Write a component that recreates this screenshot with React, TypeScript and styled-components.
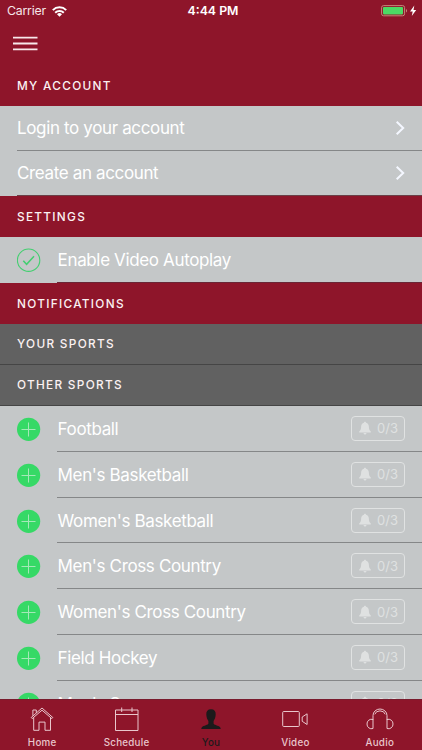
import React from "react";
import styled, { createGlobalStyle } from "styled-components";

const GlobalStyle = createGlobalStyle`
  * { box-sizing: border-box; }
  body { margin: 0; overflow: hidden; }
`;

const crimson = "#8e152a";
const silver = "#c4c7c8";

const Screen = styled.div`
  width: 422px;
  height: 750px;
  display: flex;
  flex-direction: column;
  overflow: hidden;
  background: ${silver};
  color: #fff;
  font-family: Inter, "Liberation Sans", sans-serif;
`;

const StatusBar = styled.header`
  flex: none;
  display: grid;
  grid-template-columns: 1fr auto 1fr;
  align-items: center;
  height: 22px;
  padding: 0 5px 0 7px;
  background: ${crimson};
  line-height: 22px;
`;

const Carrier = styled.div`
  display: flex;
  align-items: center;
  gap: 6px;
  color: #f6e6e9;
  font-size: 12.3px;
  letter-spacing: -0.2px;
`;

const Clock = styled.div`
  padding-left: 2px;
  font-size: 12.3px;
  font-weight: 600;
`;

const Power = styled.div`
  display: flex;
  justify-content: flex-end;
  align-items: center;
`;

const NavBar = styled.nav`
  flex: none;
  display: flex;
  align-items: center;
  height: 43px;
  padding-left: 13px;
  background: ${crimson};
`;

const SectionTitle = styled.h2<{ $tone?: "dark" }>`
  flex: none;
  display: flex;
  align-items: center;
  height: 41px;
  margin: 0;
  padding: 1px 0 0 17px;
  background: ${(p) => (p.$tone ? "#616161" : crimson)};
  border-bottom: ${(p) => (p.$tone ? "1px solid #454545" : "0")};
  font-size: 11.8px;
  font-weight: 500;
  letter-spacing: 1.3px;
  color: #fbf1f2;
`;

const Row = styled.div<{ $height: number }>`
  display: flex;
  height: ${(p) => p.$height}px;
  padding-left: 17px;
`;

const RowLead = styled.div`
  flex: none;
  display: flex;
  align-items: center;
  width: 40px;
`;

const RowBody = styled.div<{ $line?: string }>`
  flex: 1;
  display: flex;
  align-items: center;
  justify-content: space-between;
  padding-right: 17px;
  border-bottom: 1px solid ${(p) => p.$line ?? "#858788"};
`;

const Label = styled.span<{ $indent?: boolean }>`
  padding-left: ${(p) => (p.$indent ? 0.6 : 0)}px;
  padding-top: ${(p) => (p.$indent ? 1 : 0)}px;
  font-size: 17px;
  letter-spacing: -0.36px;
  white-space: nowrap;
`;

const AlertCount = styled.div`
  display: flex;
  align-items: center;
  gap: 6px;
  width: 54px;
  height: 25px;
  padding-left: 7px;
  border: 1px solid #e0e2e2;
  border-radius: 4px;
  color: #dfe1e1;
  font-size: 13px;
`;

const List = styled.main`
  flex: 1;
  min-height: 0;
  overflow: hidden;
`;

const Sports = styled.section`
  padding-top: 0.6px;
`;

const TabBar = styled.footer`
  flex: none;
  display: grid;
  grid-template-columns: repeat(5, 1fr);
  height: 51px;
  background: ${crimson};
  border-top: 1px solid #791c2d;
`;

const Tab = styled.div<{ $active?: boolean }>`
  display: flex;
  flex-direction: column;
  align-items: center;
  padding-top: 6px;
  color: ${(p) => (p.$active ? "#1c1a1b" : "#e9c6cc")};
`;

const TabName = styled.span`
  margin-top: 5px;
  font-size: 9.8px;
  font-weight: 500;
  line-height: 12px;
  letter-spacing: 0.25px;
`;

const Wifi = () => (
  <svg width="15" height="11" viewBox="0 0 15 11" fill="none" stroke="#fff" strokeWidth="2">
    <path d="M.8 4.100a9.500 9.500 0 0 1 13.400 0M3.200 6.700a6.100 6.100 0 0 1 8.600 0" />
    <path d="M7.500 10.800 5 8.300a3.600 3.600 0 0 1 5 0z" fill="#fff" stroke="none" />
  </svg>
);

const Battery = () => (
  <svg width="36" height="12" viewBox="0 0 36 12">
    <rect x=".6" y=".6" width="23" height="10.200" rx="2" fill="none" stroke="#c4877a" />
    <rect x="2" y="2" width="20" height="7.400" rx=".8" fill="#4cd964" />
    <path d="M25 4v3.400q1.100-.5 1.100-1.700T25 4" fill="#c4877a" />
    <path d="M33.300.6 29 6.500h2.700L30.800 11l4.400-6h-2.700z" fill="#fff" />
  </svg>
);

const Menu = () => (
  <svg width="25" height="16" viewBox="0 0 25 16" stroke="#f8e8ea" strokeWidth="1.800">
    <path d="M0 1.600h24.500M0 7.500h24.500M0 13.400h24.500" />
  </svg>
);

const Chevron = () => (
  <svg width="10" height="16" viewBox="0 0 10 16" fill="none" stroke="#f4f7ff" strokeWidth="2">
    <path d="m1.700 1.700 6.500 6.300-6.500 6.300" />
  </svg>
);

const CheckCircle = () => (
  <svg width="24" height="24" viewBox="0 0 24 24" fill="none" stroke="#43cf70">
    <circle cx="11.600" cy="12.200" r="11.200" strokeWidth="1.100" />
    <path d="m6.300 12.700 3.300 3.600 7.400-8" strokeWidth="1.500" />
  </svg>
);

const AddCircle = () => (
  <svg width="24" height="24" viewBox="0 0 24 24">
    <circle cx="11.600" cy="12.300" r="11.600" fill="#36d966" />
    <path d="M4.500 12.500h14M11.500 5.500v14" stroke="#a5e8b8" strokeWidth="1" />
  </svg>
);

const Bell = () => (
  <svg width="12" height="14" viewBox="1 0 12 14.500" fill="currentColor">
    <path d="M7 .7c.7 0 1.100.5 1.100 1.100 2 .6 2.800 2.100 2.900 4 .1 2.600.5 3.900 2 5.200v.8H1V11c1.500-1.300 1.900-2.600 2-5.200.1-1.900.9-3.400 2.900-4C5.900 1.200 6.300.7 7 .7M5.400 12.400h3.200Q8.300 14.100 7 14.100t-1.600-1.700" />
  </svg>
);

const tabStroke = { fill: "none", stroke: "currentColor", strokeWidth: 1 };

const HomeIcon = () => (
  <svg width="26" height="26" viewBox="0 0 26 26" {...tabStroke}>
    <path d="M2.200 11.500 13 2l10.800 9.500-1 1.100L13 4.200l-9.800 8.400zM3.900 9.800V4h3.400v2.900M4.700 11.500v12.800H10v-8.200h6v8.200h5.500V11.500" />
  </svg>
);

const CalendarIcon = () => (
  <svg width="26" height="26" viewBox="0 0 26 26" {...tabStroke}>
    <path d="M1.500 4h22.500v20.500H1.500zM1.500 8.500h22.500M7.700 1.500v4.500M18 1.500v4.500" />
  </svg>
);

const PersonIcon = () => (
  <svg width="26" height="26" viewBox="0 0 26 26" fill="currentColor">
    <path d="M13 3.200c3.300 0 4.900 2 4.700 5.200-.1 3-1.200 5.200-2.100 6.500v2.600c0 1.500 4.900 1.900 6.500 3.700.4.500.6 1.100.6 1.700H3.300c0-.6.200-1.200.6-1.700 1.600-1.800 6.500-2.200 6.500-3.700v-2.600c-.9-1.300-2-3.500-2.100-6.500-.2-3.200 1.400-5.200 4.700-5.200" />
  </svg>
);

const VideoIcon = () => (
  <svg width="28" height="26" viewBox="0 0 28 26" {...tabStroke}>
    <rect x="1.700" y="5.500" width="16.600" height="15" rx="1" />
    <path d="M21.200 11v4.300l4.900 3.200V7.800z" />
  </svg>
);

const AudioIcon = () => (
  <svg width="28" height="26" viewBox="0 0 28 26" {...tabStroke}>
    <path d="M7 14v-4.500a7 6.500 0 0 1 14 0V14M8.800 8.300a5.400 4.700 0 0 1 10.400 0" />
    <path d="M7 13.500v9a4.500 4.500 0 0 1-6-4.500 4.500 4.500 0 0 1 6-4.500M21 13.500v9a4.500 4.500 0 0 0 6-4.500 4.500 4.500 0 0 0-6-4.500" />
  </svg>
);

const sports = [
  "Football",
  "Men's Basketball",
  "Women's Basketball",
  "Men's Cross Country",
  "Women's Cross Country",
  "Field Hockey",
  "Men's Soccer",
];

const tabs = [
  { name: "Home", Icon: HomeIcon },
  { name: "Schedule", Icon: CalendarIcon },
  { name: "You", Icon: PersonIcon, active: true },
  { name: "Video", Icon: VideoIcon },
  { name: "Audio", Icon: AudioIcon },
];

export default function App() {
  return (
    <Screen>
      <GlobalStyle />
      <StatusBar>
        <Carrier>Carrier <Wifi /></Carrier>
        <Clock>4:44 PM</Clock>
        <Power><Battery /></Power>
      </StatusBar>
      <NavBar><Menu /></NavBar>
      <List>
        <SectionTitle>MY ACCOUNT</SectionTitle>
        <Row $height={45}>
          <RowBody><Label>Login to your account</Label><Chevron /></RowBody>
        </Row>
        <Row $height={45}>
          <RowBody $line="#6a4047"><Label>Create an account</Label><Chevron /></RowBody>
        </Row>
        <SectionTitle>SETTINGS</SectionTitle>
        <Row $height={45.5}>
          <RowLead><CheckCircle /></RowLead>
          <RowBody $line="#6a2535"><Label $indent>Enable Video Autoplay</Label></RowBody>
        </Row>
        <SectionTitle>NOTIFICATIONS</SectionTitle>
        <SectionTitle $tone="dark">YOUR SPORTS</SectionTitle>
        <SectionTitle $tone="dark">OTHER SPORTS</SectionTitle>
        <Sports>
          {sports.map((sport) => (
            <Row key={sport} $height={45.8}>
              <RowLead><AddCircle /></RowLead>
              <RowBody>
                <Label $indent>{sport}</Label>
                <AlertCount><Bell />0/3</AlertCount>
              </RowBody>
            </Row>
          ))}
        </Sports>
      </List>
      <TabBar>
        {tabs.map(({ name, Icon, active }) => (
          <Tab key={name} $active={active}>
            <Icon />
            <TabName>{name}</TabName>
          </Tab>
        ))}
      </TabBar>
    </Screen>
  );
}
